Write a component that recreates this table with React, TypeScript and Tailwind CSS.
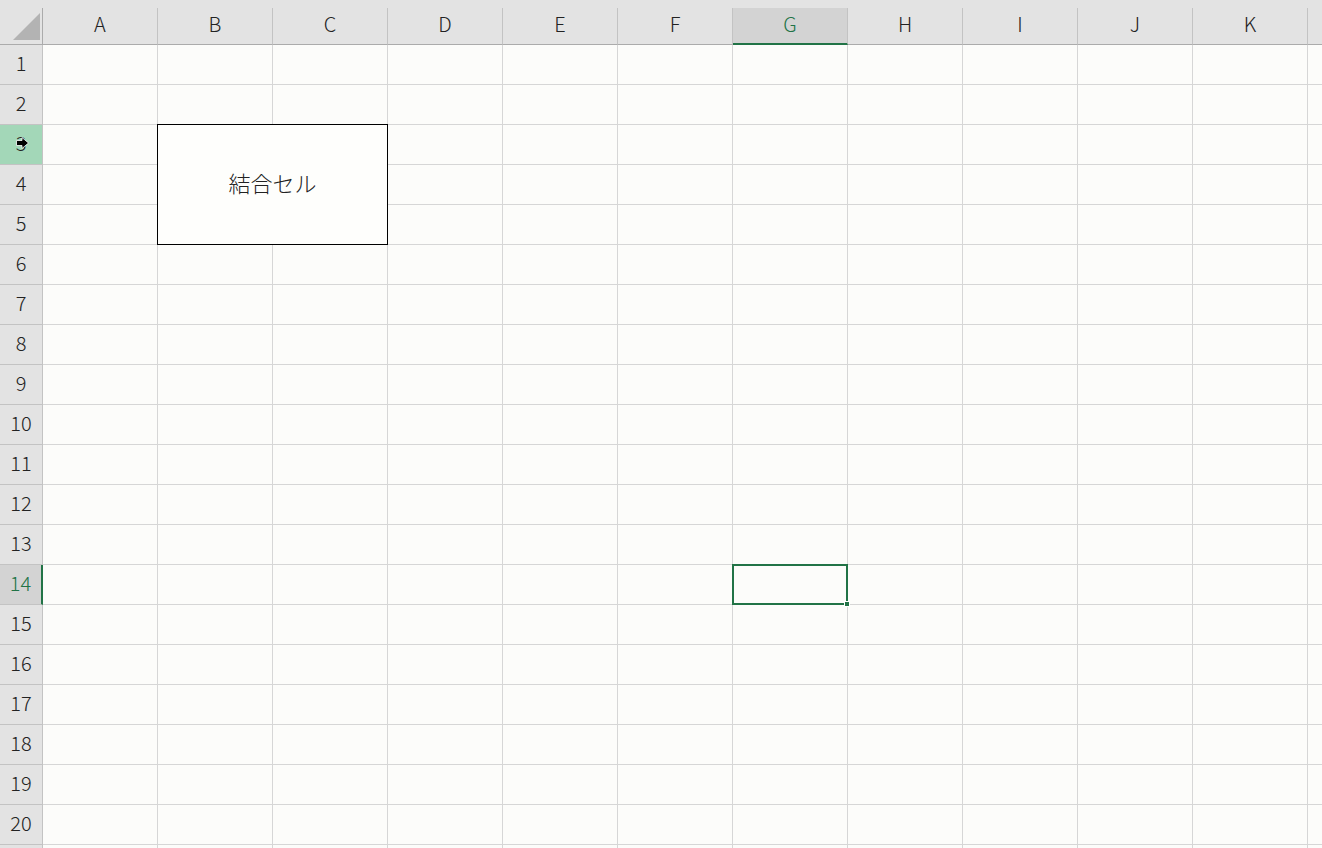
import React from "react";

const COLS = ["A", "B", "C", "D", "E", "F", "G", "H", "I", "J", "K", ""];
const ROWS = Array.from({ length: 21 }, (_, i) => i + 1);

function Corner() {
  return (
    <div className="border-r border-b border-[#ababab] bg-[#e3e3e3] relative">
      <svg className="absolute left-0 top-0" width="42" height="36" viewBox="0 0 42 36">
        <polygon points="40,5 40,32 13,32" fill="#b3b3b3" />
      </svg>
    </div>
  );
}

function ColHeader({ label, idx }: { label: string; idx: number }) {
  const selected = label === "G";
  if (selected) {
    return (
      <div className="flex items-center justify-center pb-1 bg-[#d3d3d3] border-r border-[#c3c3c3] border-b-2 border-b-[#217346] text-[#217346] text-[20px]">
        {label}
      </div>
    );
  }
  return (
    <div
      className={
        "flex items-center justify-center pb-1 bg-[#e3e3e3] border-b border-[#ababab] text-[#222] text-[20px] " +
        (idx < 11 ? "border-r border-r-[#c3c3c3]" : "")
      }
    >
      {label}
    </div>
  );
}

function RowHeader({ n }: { n: number }) {
  if (n === 3) {
    return (
      <div className="relative flex items-center justify-center pb-1 bg-[#a3d7b8] border-r border-b border-[#c3c3c3] text-[#222] text-[20px]">
        {n}
        <svg className="absolute left-0 top-0" width="42" height="40" viewBox="0 0 42 40">
          <path d="M16.5 15.5 H22 V12.5 L28.5 18 L22 23.5 V20.5 H16.5 Z" fill="#000" stroke="#fff" strokeWidth="0.8" />
        </svg>
      </div>
    );
  }
  if (n === 14) {
    return (
      <div className="flex items-center justify-center pb-1 bg-[#d3d3d3] border-r-2 border-r-[#217346] border-b border-b-[#c3c3c3] text-[#217346] text-[20px]">
        {n}
      </div>
    );
  }
  return (
    <div className="flex items-center justify-center pb-1 bg-[#e3e3e3] border-r border-b border-[#c3c3c3] text-[#222] text-[20px]">
      {n}
    </div>
  );
}

export default function App() {
  return (
    <div className="h-[848px] w-[1322px] overflow-hidden bg-[#fcfcfa] font-['Noto_Sans_CJK_JP','Noto_Sans',sans-serif] font-light flex flex-col">
      <div className="h-2 shrink-0 bg-[#e3e3e3]" />
      <div className="grid grid-cols-[43px_repeat(11,115px)_1fr] grid-rows-[37px_repeat(21,40px)]">
        <Corner />
        {COLS.map((c, i) => (
          <ColHeader key={"h" + i} label={c} idx={i} />
        ))}
        {ROWS.map((r) => (
          <React.Fragment key={r}>
            <RowHeader n={r} />
            {COLS.map((c, i) => {
              if ((c === "B" || c === "C") && r >= 3 && r <= 5) {
                if (c === "B" && r === 3) {
                  return (
                    <div
                      key={c + r}
                      className="col-start-3 col-span-2 row-start-4 row-span-3 mr-px mb-px relative z-10 bg-[#fefefc] outline outline-1 outline-black flex items-center justify-center pb-1 text-[22px] text-[#222]"
                    >
                      結合セル
                    </div>
                  );
                }
                return null;
              }
              if (c === "G" && r === 14) {
                return (
                  <div key={c + r} className="relative border-r border-b border-[#d6d6d6] z-10">
                    <div className="absolute -inset-px border-2 border-[#217346]" />
                    <div className="absolute right-[-3px] bottom-[-3px] w-[6px] h-[6px] bg-[#217346] border border-white" />
                  </div>
                );
              }
              return (
                <div
                  key={c + r}
                  className={"border-b border-[#d6d6d6] " + (i < 11 ? "border-r" : "")}
                />
              );
            })}
          </React.Fragment>
        ))}
      </div>
    </div>
  );
}
